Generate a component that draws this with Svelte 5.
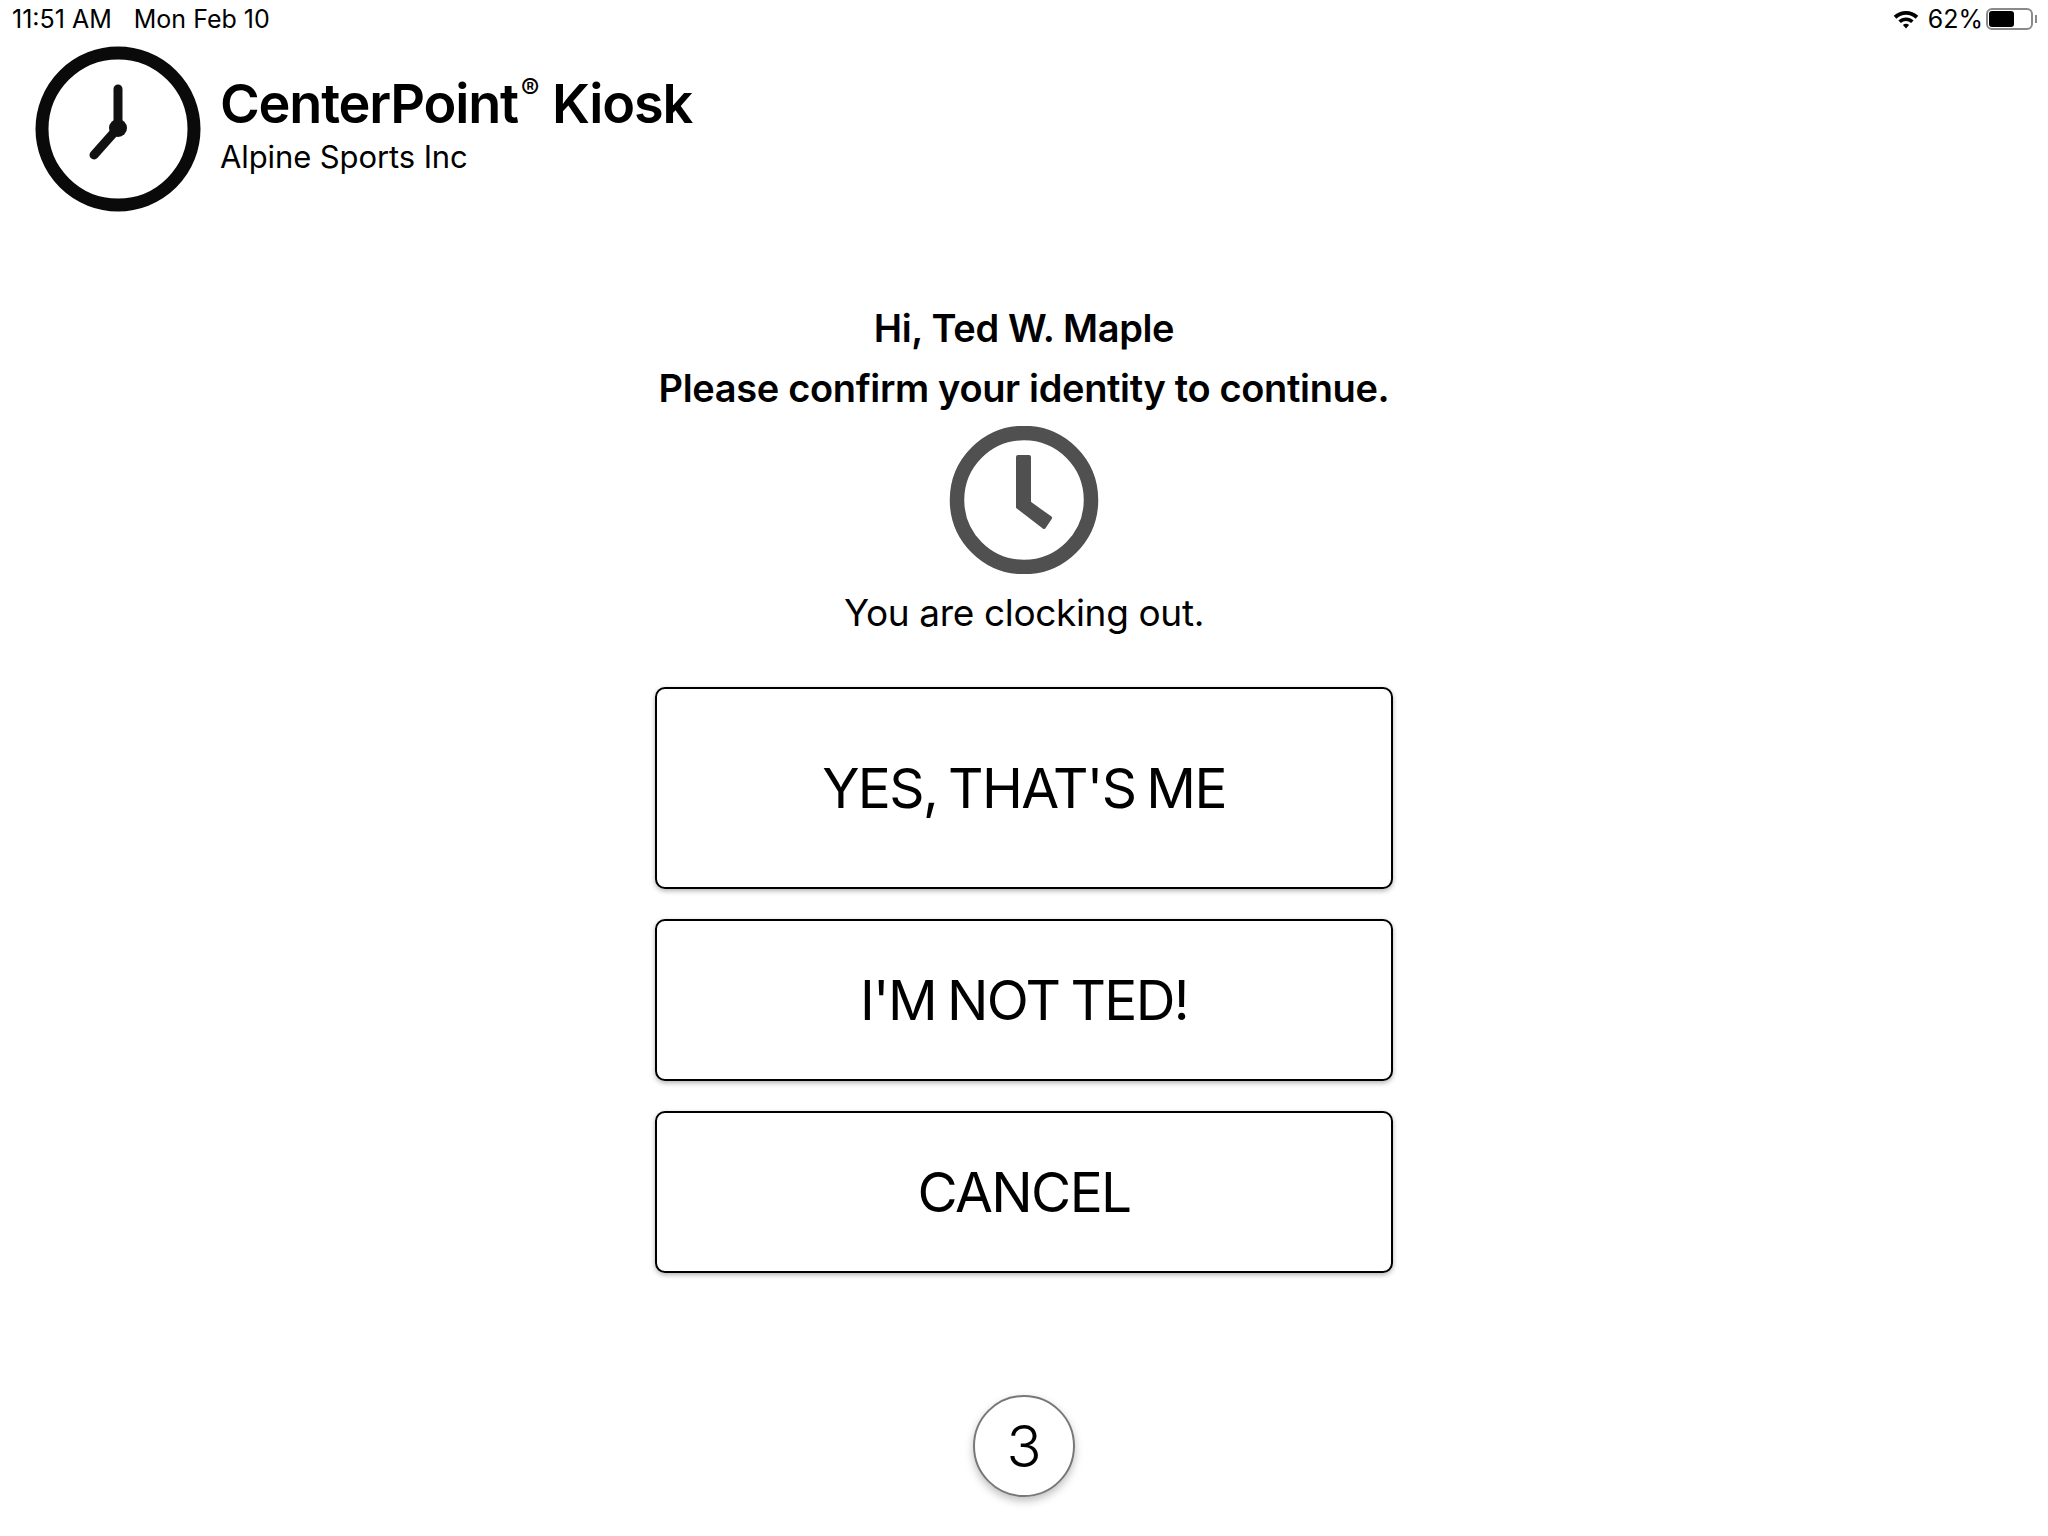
<script lang="ts">
    let seconds = 3;
</script>

<div class="page">
    <div class="statusbar">
        <div class="clock"><span>11:51 AM</span><span>Mon Feb 10</span></div>
        <div class="status-right">
            <svg class="wifi" width="26" height="20" viewBox="0 0 28 22">
                <path d="M0.5 7.5C8 0.5 20 0.5 27.5 7.5L24.6 10.6C18.5 5 9.5 5 3.4 10.6Z" fill="#000"/>
                <path d="M5.6 12.6C10.4 8.2 17.6 8.2 22.4 12.6L19.6 15.5C16.3 12.5 11.7 12.5 8.4 15.5Z" fill="#000"/>
                <path d="M10.6 17.6C12.6 15.9 15.4 15.9 17.4 17.6L14 21.4Z" fill="#000"/>
            </svg>
            <span>62%</span>
            <div class="battery"><div class="battery-fill" style="width: {62}%"></div></div>
            <div class="battery-tip"></div>
        </div>
    </div>

    <div class="header">
        <svg class="logo" width="168" height="168" viewBox="0 0 168 168">
            <circle cx="84" cy="84" r="76" fill="none" stroke="#0a0a0a" stroke-width="13"/>
            <circle cx="84" cy="83" r="9" fill="#111"/>
            <path d="M84 44V83L60 110" fill="none" stroke="#111" stroke-width="9" stroke-linecap="round" stroke-linejoin="round"/>
        </svg>
        <div class="brand">
            <div class="title">CenterPoint<sup>®</sup> Kiosk</div>
            <div class="company">Alpine Sports Inc</div>
        </div>
    </div>

    <div class="main">
        <div class="greeting">Hi, Ted W. Maple</div>
        <div class="confirm">Please confirm your identity to continue.</div>
        <svg class="clock-icon" width="150" height="148" viewBox="0 0 150 148">
            <circle cx="75" cy="74" r="67" fill="none" stroke="#505050" stroke-width="14.5"/>
            <path d="M69 31H80V77L101 92L95 101L69 81Z" fill="#505050" stroke="#505050" stroke-width="4" stroke-linejoin="round"/>
        </svg>
        <div class="clocking">You are clocking out.</div>

        <button class="big first">YES, THAT'S ME</button>
        <button class="big">I'M NOT TED!</button>
        <button class="big">CANCEL</button>

        <div class="countdown">{seconds}</div>
    </div>
</div>

<style>
:global(body) {
    background: #fff;
    color: #000;
    font-family: Inter, "Liberation Sans", sans-serif;
}

.page {
    width: 2048px;
    height: 1536px;
    overflow: hidden;
    display: flex;
    flex-direction: column;
}

.statusbar {
    display: flex;
    justify-content: space-between;
    align-items: center;
    height: 38px;
    padding: 0 11px 0 12px;
    font-size: 25px;
    flex-shrink: 0;
}

.clock {
    display: flex;
    gap: 22px;
}

.status-right {
    display: flex;
    align-items: center;
}

.wifi {
    margin-right: 9px;
}

.battery {
    width: 47px;
    height: 22px;
    box-sizing: border-box;
    border: 2px solid #8a8a8a;
    border-radius: 6px;
    padding: 1px;
    margin-left: 3px;
}

.battery-fill {
    height: 100%;
    background: #000;
    border-radius: 3px;
}

.battery-tip {
    width: 2px;
    height: 8px;
    background: #8a8a8a;
    margin-left: 2px;
}

.header {
    display: flex;
    align-items: center;
    padding: 7px 0 0 34px;
    gap: 18px;
    flex-shrink: 0;
}

.brand {
    display: flex;
    flex-direction: column;
    margin-top: -13px;
}

.title {
    font-size: 54px;
    font-weight: 600;
    line-height: 68px;
    letter-spacing: -1.2px;
}

.title sup {
    font-size: 28px;
    font-weight: 400;
    line-height: 0;
    vertical-align: 24px;
    margin: 0 0 0 3px;
    letter-spacing: 0;
}

.company {
    font-size: 31px;
    line-height: 38px;
    letter-spacing: -0.1px;
}

.main {
    display: flex;
    flex-direction: column;
    align-items: center;
    padding-top: 85px;
}

.greeting, .confirm {
    font-size: 38px;
    font-weight: 600;
    line-height: 60px;
    letter-spacing: -0.35px;
}

.clock-icon {
    margin-top: 8px;
}

.clocking {
    font-size: 37px;
    line-height: 48px;
    margin-top: 15px;
    letter-spacing: -0.35px;
}

.big {
    display: block;
    width: 738px;
    height: 162px;
    margin-top: 30px;
    background: #fff;
    border: 2px solid #000;
    border-radius: 10px;
    box-shadow: 0 2px 5px rgba(0, 0, 0, 0.3);
    font-family: inherit;
    font-size: 55px;
    color: #000;
    letter-spacing: -1.6px;
    word-spacing: -3px;
    padding: 0;
}

.big.first {
    height: 202px;
    margin-top: 50px;
}

.countdown {
    width: 102px;
    height: 102px;
    box-sizing: border-box;
    margin-top: 122px;
    border: 2px solid #777;
    border-radius: 50%;
    box-shadow: 0 4px 8px rgba(0, 0, 0, 0.25);
    display: flex;
    align-items: center;
    justify-content: center;
    font-size: 58px;
    font-weight: 300;
}
</style>
